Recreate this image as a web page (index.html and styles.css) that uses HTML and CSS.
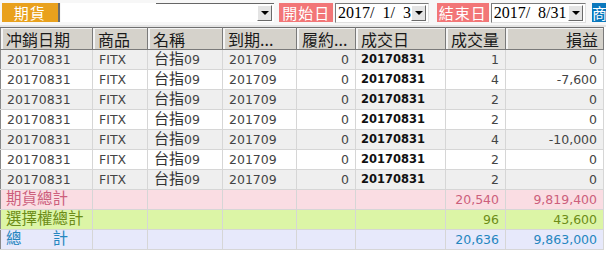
FILE: index.html
```html
<!DOCTYPE html>
<html lang="zh-Hant">
<head>
    <meta charset="UTF-8">
    <title>沖銷明細</title>
    <link rel="stylesheet" href="styles.css">
</head>
<body>

    <div class="query-bar">
        <div class="tag tag-orange">期貨</div>
        <div class="combo combo-wide">
            <span class="combo-text"></span>
            <span class="drop-btn"></span>
        </div>
        <div class="tag tag-pink start">開始日</div>
        <div class="combo combo-date">
            <span class="combo-text">2017/  1/  3</span>
            <span class="drop-btn"></span>
        </div>
        <div class="tag tag-pink end">結束日</div>
        <div class="combo combo-date wide">
            <span class="combo-text">2017/  8/31</span>
            <span class="drop-btn"></span>
        </div>
        <div class="tag tag-blue">商</div>
    </div>

    <table class="grid">
        <colgroup>
            <col style="width:92px">
            <col style="width:55px">
            <col style="width:75px">
            <col style="width:74px">
            <col style="width:59px">
            <col style="width:90px">
            <col style="width:60px">
            <col style="width:98px">
        </colgroup>
        <thead>
            <tr>
                <th>冲銷日期</th>
                <th>商品</th>
                <th>名稱</th>
                <th>到期...</th>
                <th>履約...</th>
                <th>成交日</th>
                <th>成交量</th>
                <th class="num">損益</th>
            </tr>
        </thead>
        <tbody>
            <tr class="odd">
                <td>20170831</td><td>FITX</td><td class="name">台指<span>09</span></td><td>201709</td>
                <td class="num">0</td><td class="bold">20170831</td><td class="num">1</td><td class="num">0</td>
            </tr>
            <tr>
                <td>20170831</td><td>FITX</td><td class="name">台指<span>09</span></td><td>201709</td>
                <td class="num">0</td><td class="bold">20170831</td><td class="num">4</td><td class="num">-7,600</td>
            </tr>
            <tr class="odd">
                <td>20170831</td><td>FITX</td><td class="name">台指<span>09</span></td><td>201709</td>
                <td class="num">0</td><td class="bold">20170831</td><td class="num">2</td><td class="num">0</td>
            </tr>
            <tr>
                <td>20170831</td><td>FITX</td><td class="name">台指<span>09</span></td><td>201709</td>
                <td class="num">0</td><td class="bold">20170831</td><td class="num">2</td><td class="num">0</td>
            </tr>
            <tr class="odd">
                <td>20170831</td><td>FITX</td><td class="name">台指<span>09</span></td><td>201709</td>
                <td class="num">0</td><td class="bold">20170831</td><td class="num">4</td><td class="num">-10,000</td>
            </tr>
            <tr>
                <td>20170831</td><td>FITX</td><td class="name">台指<span>09</span></td><td>201709</td>
                <td class="num">0</td><td class="bold">20170831</td><td class="num">2</td><td class="num">0</td>
            </tr>
            <tr class="odd">
                <td>20170831</td><td>FITX</td><td class="name">台指<span>09</span></td><td>201709</td>
                <td class="num">0</td><td class="bold">20170831</td><td class="num">2</td><td class="num">0</td>
            </tr>
            <tr class="total futures">
                <td class="label">期貨總計</td><td></td><td></td><td></td>
                <td></td><td></td><td class="num">20,540</td><td class="num">9,819,400</td>
            </tr>
            <tr class="total options">
                <td class="label">選擇權總計</td><td></td><td></td><td></td>
                <td></td><td></td><td class="num">96</td><td class="num">43,600</td>
            </tr>
            <tr class="total all">
                <td class="label">總　　計</td><td></td><td></td><td></td>
                <td></td><td></td><td class="num">20,636</td><td class="num">9,863,000</td>
            </tr>
        </tbody>
    </table>

</body>
</html>
```

FILE: styles.css
```css
body {
    margin: 0;
    background-color: #fff;
    font-family: "DejaVu Sans", sans-serif;
    overflow: hidden;
}
.query-bar {
    display: flex;
    align-items: center;
    height: 25px;
    padding-left: 2px;
    background-color: #f7f7f7;
    border-bottom: 2px solid #e4e4e4;
}
.tag {
    height: 19px;
    line-height: 19px;
    color: #fff;
    font-family: "Noto Sans CJK TC", sans-serif;
    font-size: 15px;
    text-align: center;
    letter-spacing: 1px;
}
.tag-orange {
    width: 56px;
    background-color: #e9a11d;
    border-right: 2px solid #6b6b6b;
}
.tag-pink {
    width: 54px;
    background-color: #f27677;
}
.tag-pink.start { margin-left: 5px; }
.tag-pink.end { margin-left: 8px; width: 52px; }
.tag-blue {
    width: 14px;
    margin-left: 6px;
    background-color: #0a78bd;
    overflow: hidden;
    text-align: left;
    letter-spacing: 0;
}
.combo {
    display: flex;
    align-items: center;
    height: 19px;
    background-color: #fff;
    margin-left: 1px;
}
.combo-wide {
    width: 215px;
    background: linear-gradient(#666, #666) right top / 118px 1px no-repeat, #fff;
}
.combo-date {
    width: 92px;
    margin-left: 2px;
    border: 1px solid #7a7a7a;
    border-right-color: #e0e0e0;
    border-bottom-color: #e0e0e0;
    height: 18px;
}
.combo-date.wide { width: 94px; }
.combo-text {
    flex: 1;
    padding-left: 2px;
    font-family: "Liberation Serif", serif;
    font-size: 16px;
    line-height: 18px;
    white-space: pre;
    color: #000;
}
.drop-btn {
    position: relative;
    width: 13px;
    height: 14px;
    margin-right: 2px;
    background-color: #e4e4e4;
    border: 1px solid #fff;
    border-right-color: #6a6a6a;
    border-bottom-color: #6a6a6a;
}
.drop-btn::after {
    content: "";
    position: absolute;
    left: 3px;
    top: 5px;
    border-left: 4px solid transparent;
    border-right: 4px solid transparent;
    border-top: 4px solid #000;
}
.grid {
    border-collapse: collapse;
    table-layout: fixed;
    width: 603px;
    border-left: 1px solid #8a8a8a;
    border-bottom: 1px solid #a0a0a0;
}
.grid th {
    height: 21px;
    padding: 0 5px;
    background-color: #d5d2cb;
    border-top: 1px solid #707070;
    border-right: 1px solid #7a7a7a;
    border-bottom: 1px solid #7a7a7a;
    box-shadow: inset 2px 1px 0 #f4f4f4;
    font-family: "Noto Sans CJK TC", sans-serif;
    font-weight: normal;
    font-size: 16px;
    line-height: 20px;
    color: #1a1a1a;
    text-align: left;
    white-space: nowrap;
    overflow: hidden;
}
.grid th.num { text-align: right; }
.grid td {
    height: 19px;
    padding: 0 6px;
    border-right: 1px solid #d6d6d6;
    border-bottom: 1px solid #d6d6d6;
    font-size: 12.5px;
    line-height: 19px;
    color: #444;
    white-space: nowrap;
    overflow: hidden;
}
.grid td.num { text-align: right; }
.grid td.bold {
    font-weight: bold;
    font-size: 11.5px;
    color: #111;
    padding-left: 5px;
}
.grid td.name {
    font-family: "DejaVu Sans", "Noto Sans CJK TC", sans-serif;
    font-size: 15px;
    color: #333;
}
.grid td.name span {
    font-size: 12.5px;
    line-height: 1;
    color: #444;
}
.grid tr.odd td { background-color: #efefef; }
.grid td.label {
    font-family: "DejaVu Sans", "Noto Sans CJK TC", sans-serif;
    font-size: 15.5px;
    padding-left: 5px;
    overflow: visible;
}
.grid tr.futures td { background-color: #fadde3; color: #cc5f7c; }
.grid tr.options td { background-color: #dcf5a6; color: #6c8c16; }
.grid tr.all td { background-color: #e7e9fb; color: #2586bf; }
```
